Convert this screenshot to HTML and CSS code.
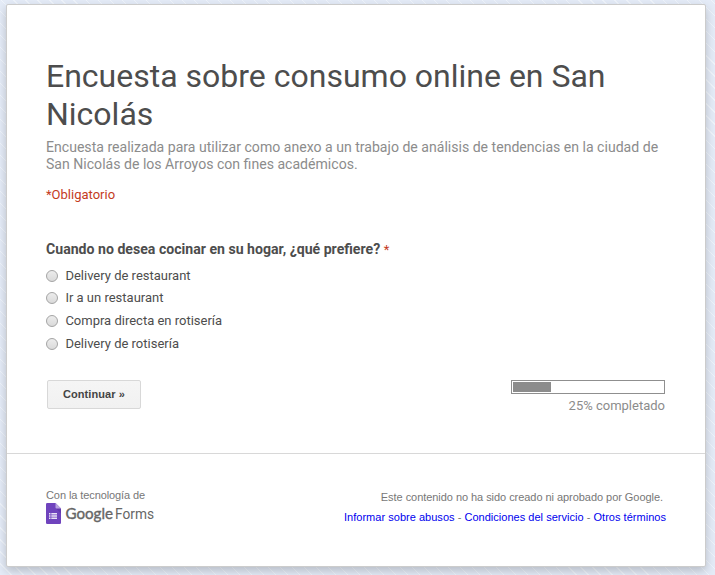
FILE: index.html
```html
<!DOCTYPE html>
<html lang="es">
<head>
<meta charset="utf-8">
<title>Encuesta sobre consumo online en San Nicolás</title>
<link rel="stylesheet" href="styles.css">
</head>
<body>
<main class="card">
  <form class="form">
    <h1 class="title"><span class="title-line">Encuesta sobre consumo online en San</span> Nicolás</h1>
    <p class="description"><span class="nowrap">Encuesta realizada para utilizar como anexo a un trabajo de análisis de tendencias en la ciudad de</span> San Nicolás de los Arroyos con fines académicos.</p>
    <p class="required">*Obligatorio</p>
    <h2 class="question">Cuando no desea cocinar en su hogar, ¿qué prefiere? <span class="star">*</span></h2>
    <div class="options">
      <label class="option"><input class="radio" type="radio" name="q"><span>Delivery de restaurant</span></label>
      <label class="option"><input class="radio" type="radio" name="q"><span>Ir a un restaurant</span></label>
      <label class="option"><input class="radio" type="radio" name="q"><span>Compra directa en rotisería</span></label>
      <label class="option"><input class="radio" type="radio" name="q"><span>Delivery de rotisería</span></label>
    </div>
    <div class="actions">
      <button class="button" type="button">Continuar »</button>
      <div class="progress">
        <div class="bar"><div class="fill"></div></div>
        <div class="percent">25% completado</div>
      </div>
    </div>
  </form>
  <footer class="footer">
    <div class="powered">
      <div class="powered-text">Con la tecnología de</div>
      <div class="logo">
        <svg class="icon" width="15" height="21" viewBox="0 0 15 21">
          <path d="M1.3 0H9.5L15 5.5V19.7Q15 21 13.7 21H1.3Q0 21 0 19.7V1.3Q0 0 1.3 0Z" fill="#6f43bd"/>
          <path d="M10 5.5H15V10.5Z" fill="#6239ad"/>
          <path d="M9.5 0L15 5.5H10.5Q9.5 5.5 9.5 4.5Z" fill="#b9a4e0"/>
          <path d="M3 10h1.5v1.4H3zM5.3 10H11v1.4H5.3zM3 12.3h1.5v1.4H3zM5.3 12.3H11v1.4H5.3zM3 14.6h1.5V16H3zM5.3 14.6H11V16H5.3z" fill="#e9e2f6"/>
        </svg>
        <svg class="wordmark" width="96" height="24" viewBox="0 0 96 24">
          <text class="google" x="0.5" y="17" textLength="47.5" lengthAdjust="spacingAndGlyphs">Google</text>
          <text class="forms" x="50" y="17" textLength="39" lengthAdjust="spacingAndGlyphs">Forms</text>
        </svg>
      </div>
    </div>
    <div class="legal">
      <div class="disclaimer">Este contenido no ha sido creado ni aprobado por Google.</div>
      <div class="links"><a href="#">Informar sobre abusos</a> - <a href="#">Condiciones del servicio</a> - <a href="#">Otros términos</a></div>
    </div>
  </footer>
</main>
</body>
</html>
```
FILE: styles.css
```css
* { box-sizing: border-box; }
html, body { height: 100%; }
body {
  margin: 0;
  padding: 4px 9px 8px 6px;
  overflow: hidden;
  background: repeating-linear-gradient(45deg, #e4ebf7 0 7.7px, #eff4fb 7.7px 8.5px);
  font-family: Roboto, sans-serif;
  color: #4d4d4d;
}
.card {
  height: 563px;
  background: #fff;
  border: 1px solid #ccc;
  border-radius: 2px;
  box-shadow: 0 4px 10px rgba(0, 0, 0, 0.2);
}
.form { height: 449px; padding: 52px 39px 0; border-bottom: 1px solid #d8d8d8; }
.title { margin: 0; font-size: 32px; line-height: 38px; font-weight: 400; color: #4d4d4d; }
.title-line, .nowrap { white-space: nowrap; }
.description { margin: 6px 0 0; font-size: 14.08px; line-height: 17px; color: #8c8c8c; }
.required { margin: 13px 0 0; font-size: 13px; line-height: 17px; color: #c43b1d; }
.question { margin: 37px 0 0; font-size: 14.12px; line-height: 18px; font-weight: 700; }
.star { font-size: 13px; font-weight: 400; color: #c43b1d; }
.options { display: grid; grid-template-rows: repeat(4, 22.67px); margin-top: 5px; font-size: 13px; }
.option { display: flex; align-items: center; gap: 7.4px; }
.radio {
  appearance: none;
  width: 12px;
  height: 12px;
  margin: 1px 0 0;
  border: 1px solid #a4a4a4;
  border-radius: 50%;
  background: linear-gradient(#ececec, #dadada);
}
.actions { display: flex; justify-content: space-between; margin-top: 25px; }
.button {
  width: 94px;
  height: 29px;
  margin-left: 1px;
  padding: 0;
  border: 1px solid #d8d8d8;
  border-radius: 2px;
  background: linear-gradient(#f5f5f5, #f1f1f1);
  color: #444;
  font: bold 11px "Liberation Sans", Arial, sans-serif;
  letter-spacing: 0.08px;
}
.progress { width: 154px; margin-right: 1px; }
.bar { height: 14px; padding: 1px; border: 1px solid #8f8f8f; }
.fill { width: 38px; height: 10px; background: #8c8c8c; }
.percent { margin-top: 3px; text-align: right; font-size: 13px; line-height: 17px; color: #8c8c8c; white-space: nowrap; }
.footer { display: flex; justify-content: space-between; padding: 35px 39px 0; font: 11px/13px "Liberation Sans", Arial, sans-serif; color: #777; }
.powered-text { white-space: nowrap; letter-spacing: -0.09px; }
.logo { display: flex; align-items: center; height: 21px; margin-top: 1px; }
.icon { margin-right: 4px; }
.google { font: 400 16px Lato, sans-serif; fill: #666; stroke: #666; stroke-width: 0.4px; }
.forms { font: 400 15px Roboto, sans-serif; fill: #666; }
.legal { padding-top: 2px; text-align: right; white-space: nowrap; }
.disclaimer { padding-right: 3px; letter-spacing: -0.05px; }
.links { margin-top: 7px; letter-spacing: 0.025px; }
.links a { color: #00e; text-decoration: none; }
```
